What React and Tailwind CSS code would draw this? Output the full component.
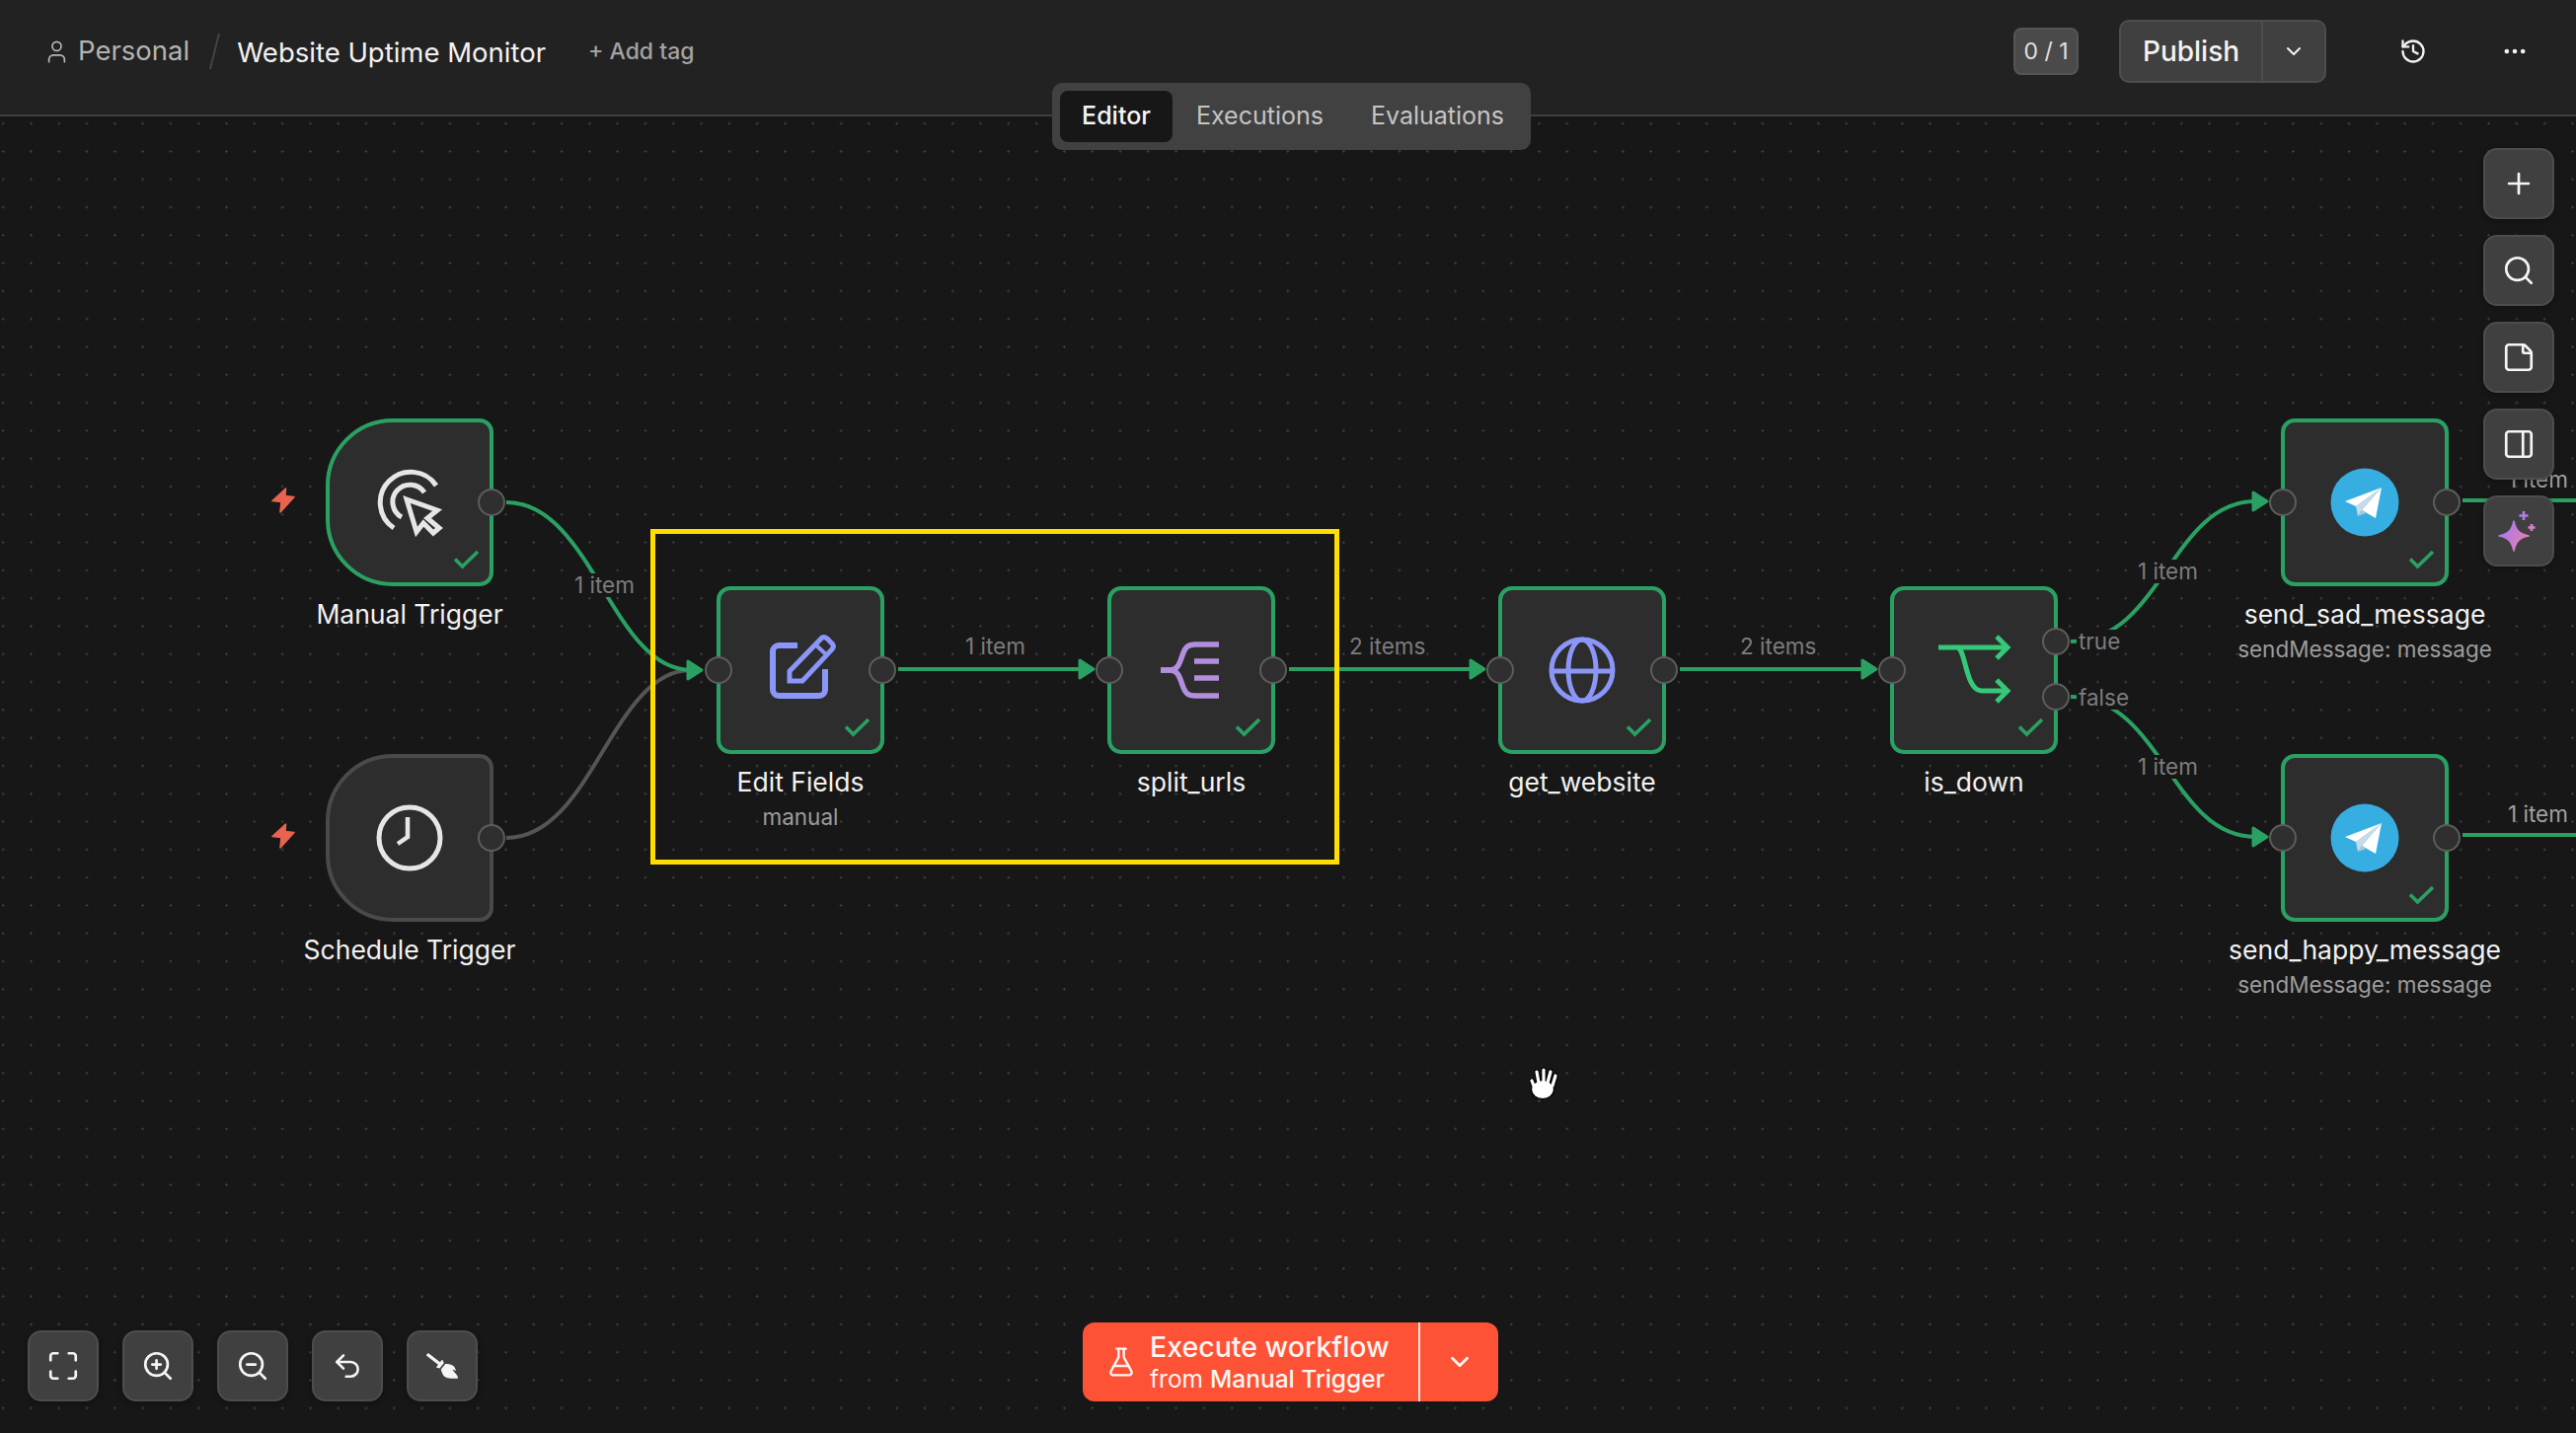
import React from "react";
import { User, ChevronDown, History, Ellipsis, Plus, Search, StickyNote, PanelRight, Maximize, ZoomIn, ZoomOut, Undo2, FlaskConical } from "lucide-react";
import { FaBroom } from "react-icons/fa";

const GREEN = "#2aa163";

function Arrow({ x, y, color = GREEN }) {
  return <polygon points={`${x - 14},${y - 9} ${x},${y} ${x - 14},${y + 9}`} fill={color} stroke={color} strokeWidth="3" strokeLinejoin="round" />;
}

function Edges() {
  const p = { fill: "none", stroke: GREEN, strokeWidth: 4 };
  return (
    <svg className="absolute left-0 top-0" width="2610" height="1452">
      <path d="M513 849 C600 849 620 679 700 679" fill="none" stroke="#555555" strokeWidth="4" />
      <path d="M513 509 C600 509 620 679 700 679" {...p} />
      <Arrow x={711} y={679} />
      <path d="M910 678 H1098" {...p} />
      <Arrow x={1108} y={678} />
      <path d="M1306 678 H1495" {...p} />
      <Arrow x={1504} y={678} />
      <path d="M1702 678 H1890" {...p} />
      <Arrow x={1901} y={678} />
      <path d="M2098 650 C2190 650 2200 508 2285 508" {...p} />
      <Arrow x={2297} y={508} />
      <path d="M2098 706 C2190 706 2200 848 2285 848" {...p} />
      <Arrow x={2297} y={848} />
      <path d="M2495 507 H2610" {...p} />
      <path d="M2495 846 H2610" {...p} />
    </svg>
  );
}

function Port({ className }) {
  return <div className={`absolute w-[28px] h-[28px] rounded-full bg-[#2f2f2f] border-2 border-[#5c5c5c] ${className}`} />;
}

function Check() {
  return (
    <svg className="absolute left-[125px] top-[129px]" width="27" height="20" viewBox="0 0 27 20">
      <path d="M2 9.5 L9.5 17 L25 2" fill="none" stroke={GREEN} strokeWidth="3.6" />
    </svg>
  );
}

function Node({ pos, name, sub, shape = "rounded-[14px]", border = "border-[#2aa163]", check = true, inPort = true, outPort = true, extra, children }) {
  return (
    <div className={`absolute w-[170px] flex flex-col items-center ${pos}`}>
      <div className={`relative w-[170px] h-[170px] shrink-0 bg-[#2d2d2d] border-4 flex items-center justify-center ${border} ${shape}`}>
        {children}
        {check && <Check />}
        {inPort && <Port className="-left-[16px] top-[67px]" />}
        {outPort && <Port className="-right-[16px] top-[67px]" />}
        {extra}
      </div>
      <div className="mt-[11px] text-[26.5px] leading-[34px] text-[#f2f2f2] whitespace-nowrap">{name}</div>
      {sub && <div className="mt-[4px] text-[22.5px] leading-[30px] text-[#9c9c9c] whitespace-nowrap">{sub}</div>}
    </div>
  );
}

function EdgeLabel({ className, children }) {
  return <div className={`absolute text-[22.5px] leading-[24px] text-[#7c7c7c] whitespace-nowrap ${className}`}>{children}</div>;
}

function Glyph({ size = 80, children }) {
  const h = size / 2;
  return <svg width={size} height={size} viewBox={`${-h} ${-h} ${size} ${size}`} fill="none">{children}</svg>;
}

function Telegram() {
  return (
    <Glyph size={70}>
      <circle r="34.5" fill="#37aee2" />
      <polygon points="17,-15 -9,4 -7,14 -3,8" fill="#c8daea" />
      <polygon points="17,-15 -20,-1 -9,4" fill="#ffffff" />
      <polygon points="17,-15 -3,8 11,16" fill="#ffffff" />
      <polygon points="-7,14 -3,8 1,11" fill="#a9c9dd" />
    </Glyph>
  );
}

function Zap({ className }) {
  return (
    <svg className={`absolute ${className}`} width="26" height="28" viewBox="0 0 26 28">
      <polygon points="15.5,2 2,14.5 11,15.5 10,26 24,10.5 15,9.5" fill="#e9634f" stroke="#e9634f" strokeWidth="1.6" strokeLinejoin="round" />
    </svg>
  );
}

function ToolBtn({ children }) {
  return (
    <button className="w-[72px] h-[72px] rounded-[14px] bg-[#404040] border-2 border-[#4d4d4d] flex items-center justify-center text-[#f5f5f5] shadow-[0_2px_6px_rgba(0,0,0,0.3)]">
      {children}
    </button>
  );
}

function Sparkle() {
  return (
    <svg width="44" height="44" viewBox="0 0 44 44">
      <defs>
        <linearGradient id="ai" x1="0" y1="0" x2="1" y2="0.6">
          <stop offset="0" stopColor="#9a78fb" />
          <stop offset="1" stopColor="#e680b0" />
        </linearGradient>
      </defs>
      <path d="M17 12 C19 21 22 25 32 27 C22 29 19 33 17 42 C15 33 12 29 2 27 C12 25 15 21 17 12 Z" fill="url(#ai)" stroke="url(#ai)" strokeWidth="1.5" strokeLinejoin="round" />
      <path d="M27 2 V11 M22.5 6.5 H31.5" stroke="#b57ce8" strokeWidth="2.6" />
      <path d="M35 15 V22 M31.5 18.5 H38.5" stroke="#d880c8" strokeWidth="2.6" />
    </svg>
  );
}

function Hand() {
  const lines = [[6, 21, 3, 13], [10, 15, 8, 4], [15, 15, 15, 2], [19, 15, 22, 4], [24, 18, 27, 8]];
  return (
    <svg className="absolute left-[1547px] top-[1080px]" width="34" height="36" viewBox="-2 -2 34 36">
      {lines.map((l, i) => <line key={i} x1={l[0]} y1={l[1]} x2={l[2]} y2={l[3]} stroke="#000" strokeWidth="5.5" strokeLinecap="round" />)}
      <ellipse cx="14" cy="22" rx="11.5" ry="9.5" fill="#fff" stroke="#000" strokeWidth="1.5" />
      {lines.map((l, i) => <line key={i} x1={l[0]} y1={l[1]} x2={l[2]} y2={l[3]} stroke="#fff" strokeWidth="3.2" strokeLinecap="round" />)}
      <ellipse cx="14" cy="22" rx="10.5" ry="8.5" fill="#fff" />
    </svg>
  );
}

export default function App() {
  return (
    <div className="relative w-[2610px] h-[1452px] overflow-hidden flex flex-col bg-[#171717] font-[family-name:Inter,sans-serif]">
      <header className="relative z-10 h-[118px] shrink-0 bg-[#222222] border-b-2 border-[#3e3e3e] flex items-center pb-[12px] pl-[44px] pr-[48px]">
        <User size={27} strokeWidth={1.5} className="text-[#b8b8b8]" />
        <span className="ml-[8px] text-[27.5px] text-[#b4b4b4]">Personal</span>
        <svg className="ml-[20px]" width="11" height="36" viewBox="0 0 11 36"><path d="M10 0 L1 36" stroke="#444444" strokeWidth="2" /></svg>
        <span className="ml-[17px] mt-[3px] text-[27.5px] text-[#f2f2f2]">Website Uptime Monitor</span>
        <span className="ml-[43px] text-[23px] font-medium text-[#a3a3a3]">+ Add tag</span>
        <div className="ml-auto flex items-center">
          <div className="w-[66px] h-[48px] rounded-[8px] bg-[#4a4a4a] border-2 border-[#555555] flex items-center justify-center text-[23px] text-[#e0e0e0]">0 / 1</div>
          <div className="ml-[41px] w-[210px] h-[64px] rounded-[10px] bg-[#404040] border-2 border-[#4d4d4d] flex items-center text-[#f2f2f2]">
            <div className="w-[144px] h-full flex items-center justify-center text-[28px] font-medium border-r-2 border-[#4d4d4d]">Publish</div>
            <div className="flex-1 flex items-center justify-center"><ChevronDown size={24} /></div>
          </div>
          <History size={28} className="ml-[74px] text-[#f2f2f2]" />
          <Ellipsis size={28} className="ml-[75px] text-[#f2f2f2]" />
        </div>
      </header>

      <div className="absolute z-20 left-[1066px] top-[84px] w-[485px] h-[68px] rounded-[10px] bg-[#414141] flex items-center px-[8px] text-[25px] text-[#c4c4c4]">
        <div className="w-[114px] h-[52px] rounded-[8px] bg-[#171717] text-[#f5f5f5] font-medium flex items-center justify-center">Editor</div>
        <span className="ml-[24px]">Executions</span>
        <span className="ml-[48px]">Evaluations</span>
      </div>

      <div className="flex-1 bg-[radial-gradient(circle,#3c3c3c_1px,transparent_1.4px)] bg-[size:28.3px_28.3px] bg-[position:-11px_-7px]" />

      <Edges />

      <EdgeLabel className="left-[580px] top-[581px] px-[2px] bg-[#171717]">1 item</EdgeLabel>
      <EdgeLabel className="left-[978px] top-[643px]">1 item</EdgeLabel>
      <EdgeLabel className="left-[1367px] top-[643px]">2 items</EdgeLabel>
      <EdgeLabel className="left-[1763px] top-[643px]">2 items</EdgeLabel>
      <EdgeLabel className="left-[2104px] top-[638px] px-[2px] bg-[#171717]">true</EdgeLabel>
      <EdgeLabel className="left-[2104px] top-[695px] px-[2px] bg-[#171717]">false</EdgeLabel>
      <EdgeLabel className="left-[2164px] top-[567px] px-[2px] bg-[#171717]">1 item</EdgeLabel>
      <EdgeLabel className="left-[2164px] top-[765px] px-[2px] bg-[#171717]">1 item</EdgeLabel>
      <EdgeLabel className="left-[2541px] top-[474px] text-[#a0a0a0]">1 item</EdgeLabel>
      <EdgeLabel className="left-[2541px] top-[813px] text-[#a0a0a0]">1 item</EdgeLabel>

      <Zap className="left-[274px] top-[493px]" />
      <Zap className="left-[274px] top-[833px]" />

      <Node pos="left-[330px] top-[424px]" name="Manual Trigger" shape="rounded-l-[68px] rounded-r-[14px]" inPort={false}>
        <Glyph>
          <path d="M-16 26 A31 31 0 1 1 27 -17" stroke="#e6e6e6" strokeWidth="5" />
          <path d="M-8 15 A17.5 17.5 0 1 1 15 -10" stroke="#e6e6e6" strokeWidth="5" />
          <polygon points="-3,-3 28,8 18,16 30,26 24,31 14,21 7,30" fill="#2d2d2d" stroke="#e6e6e6" strokeWidth="5" />
        </Glyph>
      </Node>
      <Node pos="left-[330px] top-[764px]" name="Schedule Trigger" shape="rounded-l-[68px] rounded-r-[14px]" border="border-[#4a4a4a]" check={false} inPort={false}>
        <Glyph>
          <circle r="31" stroke="#e6e6e6" strokeWidth="5" />
          <path d="M-2 -21 V-1 L-12 6" stroke="#e6e6e6" strokeWidth="4.5" />
        </Glyph>
      </Node>
      <Node pos="left-[726px] top-[594px]" name="Edit Fields" sub="manual">
        <Glyph>
          <g stroke="#8a96f8">
            <path d="M-3 -25 H-22 a6 6 0 0 0 -6 6 V20 a6 6 0 0 0 6 6 H19 a6 6 0 0 0 6 -6 V-1" strokeWidth="6" />
            <path d="M-11 11 V1 L20 -31 Q23 -35 27 -32 L31 -28 Q35 -25 32 -21 L2 11 Z" strokeWidth="5" />
            <path d="M15 -26 L27 -15" strokeWidth="4" />
          </g>
        </Glyph>
      </Node>
      <Node pos="left-[1122px] top-[594px]" name="split_urls">
        <Glyph>
          <g stroke="#b28fdc" strokeWidth="5.5">
            <path d="M-31 0 H-22 C-14 0 -12 -6 -9 -15 C-6 -24 -3 -26 4 -26 H28" />
            <path d="M-31 0 H-22 C-14 0 -12 6 -9 15 C-6 24 -3 26 4 26 H28" />
            <path d="M3 -9 H28 M3 8 H28" />
          </g>
        </Glyph>
      </Node>
      <Node pos="left-[1518px] top-[594px]" name="get_website">
        <Glyph>
          <g stroke="#8a96f8" strokeWidth="5">
            <circle r="31" />
            <ellipse rx="14" ry="31" />
            <path d="M-31 1 H31" />
          </g>
        </Glyph>
      </Node>
      <Node pos="left-[1915px] top-[594px]" name="is_down" extra={<><Port className="-right-[16px] top-[38px]" /><Port className="-right-[16px] top-[94px]" /></>} outPort={false}>
        <Glyph size={90}>
          <g stroke="#35c878" strokeWidth="5">
            <path d="M-36 -23 H34" />
            <path d="M23 -34 L34 -23 L23 -12" />
            <path d="M-17 -23 C-8 -22 -9 21 8 21 H34" />
            <path d="M23 10 L34 21 L23 32" />
          </g>
        </Glyph>
      </Node>
      <Node pos="left-[2311px] top-[424px]" name="send_sad_message" sub="sendMessage: message"><Telegram /></Node>
      <Node pos="left-[2311px] top-[764px]" name="send_happy_message" sub="sendMessage: message"><Telegram /></Node>

      <div className="absolute left-[659px] top-[536px] w-[698px] h-[340px] border-[5px] border-[#ffdd00]" />

      <Hand />

      <div className="absolute left-[2516px] top-[150px] flex flex-col gap-[16px]">
        <ToolBtn><Plus size={34} strokeWidth={1.9} /></ToolBtn>
        <ToolBtn><Search size={34} strokeWidth={1.9} /></ToolBtn>
        <ToolBtn><StickyNote size={34} strokeWidth={1.9} /></ToolBtn>
        <ToolBtn><PanelRight size={34} strokeWidth={1.9} /></ToolBtn>
        <ToolBtn><Sparkle /></ToolBtn>
      </div>

      <div className="absolute left-[28px] top-[1348px] flex gap-[24px]">
        <ToolBtn><Maximize size={34} strokeWidth={1.9} /></ToolBtn>
        <ToolBtn><ZoomIn size={34} strokeWidth={1.9} /></ToolBtn>
        <ToolBtn><ZoomOut size={34} strokeWidth={1.9} /></ToolBtn>
        <ToolBtn><Undo2 size={32} strokeWidth={1.9} /></ToolBtn>
        <ToolBtn><FaBroom size={32} className="-scale-x-100" /></ToolBtn>
      </div>

      <div className="absolute left-[1097px] top-[1340px] w-[421px] h-[80px] rounded-[12px] bg-[#fd5236] flex items-center text-[#fff5f2]">
        <div className="w-[340px] h-full flex items-center pl-[23px]">
          <FlaskConical size={32} strokeWidth={1.8} />
          <div className="ml-[13px] flex flex-col">
            <span className="text-[28.5px] leading-[34px] font-medium">Execute workflow</span>
            <span className="text-[24.5px] leading-[30px]">from <span className="font-medium">Manual Trigger</span></span>
          </div>
        </div>
        <div className="w-[2px] h-full bg-[#ffe4de]" />
        <div className="flex-1 flex items-center justify-center"><ChevronDown size={30} strokeWidth={2.2} /></div>
      </div>
    </div>
  );
}
